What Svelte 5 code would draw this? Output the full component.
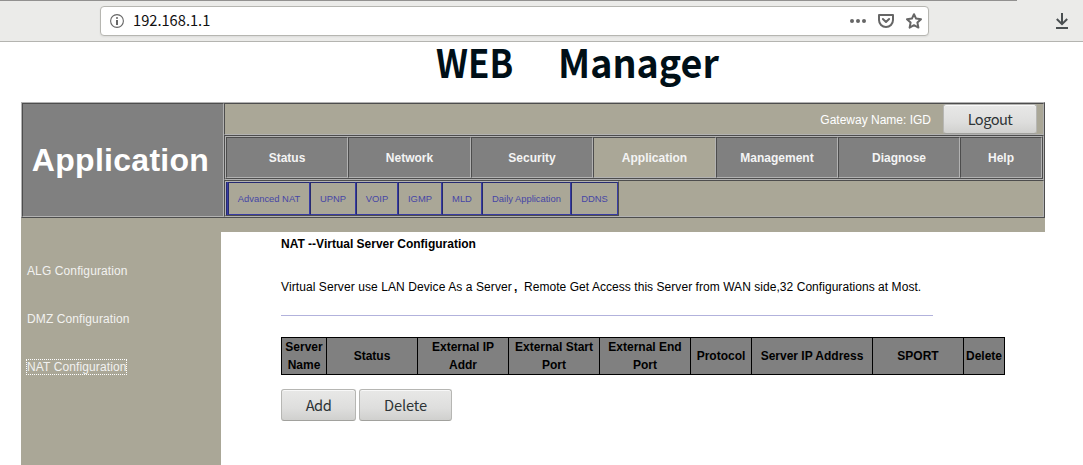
<script>
  const tabs = [
    ['Status', 122], ['Network', 123], ['Security', 122], ['Application', 123],
    ['Management', 122], ['Diagnose', 122], ['Help', 82]
  ];
  const subs = [
    ['Advanced NAT', 82], ['UPNP', 46], ['VOIP', 42], ['IGMP', 44],
    ['MLD', 40], ['Daily Application', 89], ['DDNS', 47]
  ];
  const side = ['ALG Configuration', 'DMZ Configuration', 'NAT Configuration'];
  const cols = [
    ['Server Name', 45], ['Status', 91], ['External IP Addr', 91], ['External Start Port', 91],
    ['External End Port', 91], ['Protocol', 61], ['Server IP Address', 121], ['SPORT', 91], ['Delete', 41]
  ];
</script>

<div class="chrome">
  <div class="url">
    <svg width="14" height="14" viewBox="0 0 14 14"><circle cx="7" cy="7" r="6.4" fill="none" stroke="#666" stroke-width="1.1"/><path d="M6 3.2h2v1.6H6zM6 6h2v5H6z" fill="#666"/></svg>
    <span>192.168.1.1</span>
    <svg class="dots" width="16" height="4" viewBox="0 0 16 4" fill="#666"><circle cx="2" cy="2" r="2"/><circle cx="8" cy="2" r="2"/><circle cx="14" cy="2" r="2"/></svg>
    <svg class="pocket" width="16" height="14" viewBox="0 0 16 14" fill="none" stroke="#666" stroke-width="2" stroke-linejoin="round" stroke-linecap="round"><path d="M1 1H15V6A7 7 0 0 1 1 6Z"/><path d="M4.9 5L8 8L11.1 5"/></svg>
    <svg class="star" width="16" height="16" viewBox="0 0 16 16" fill="none" stroke="#666" stroke-width="2" stroke-linejoin="round"><path d="M8 1.2L10.1 5.6L15 6.2L11.4 9.6L12.4 14.6L8 12.2L3.6 14.6L4.6 9.6L1 6.2L5.9 5.6Z"/></svg>
  </div>
  <svg class="download" width="12" height="16" viewBox="0 0 12 16" fill="none" stroke="#4a4f51" stroke-width="2"><path d="M6 0V11M.8 6L6 11.2L11.2 6M0 15H12"/></svg>
</div>

<h1 class="title"><span class="web">WEB</span><span class="manager">Manager</span></h1>

<main>
  <header>
    <div class="cell brand">Application</div>
    <div class="right">
      <div class="cell top"><span>Gateway Name: IGD</span><button class="logout">Logout</button></div>
      <div class="cell">
        <nav class="tabs">
          {#each tabs as [name, w]}
            <a class="cell" class:active={name === 'Application'} style:width="{w}px">{name}</a>
          {/each}
        </nav>
      </div>
      <div class="cell sub">
        <nav class="subs">
          {#each subs as [name, w]}
            <a style:width="{w}px">{name}</a>
          {/each}
        </nav>
      </div>
    </div>
  </header>
  <div class="body">
    <aside>
      {#each side as name}
        <a class:focused={name === 'NAT Configuration'}>{name}</a>
      {/each}
    </aside>
    <section>
      <h2>NAT --Virtual Server Configuration</h2>
      <p><span class="first">Virtual Server use LAN Device As a Server</span><span class="comma">,</span><span class="second">Remote Get Access this Server from WAN side,32 Configurations at Most.</span></p>
      <hr />
      <div class="table">
        {#each cols as [name, w]}
          <div style:width="{w}px">{name}</div>
        {/each}
      </div>
      <div class="buttons"><button class="add">Add</button><button class="del">Delete</button></div>
    </section>
  </div>
</main>

<style>
  :global(body) { background: #fff; overflow: hidden; }
  :global(#app) { height: 465px; overflow: hidden; font: 12px "Liberation Sans", Arial, sans-serif; }
  * { box-sizing: border-box; }
  .chrome { height: 42px; background: linear-gradient(90deg, #929190 1017px, #ebebe9 1017px) top / 100% 1px no-repeat, #ebebe9; border-bottom: 1px solid #b4b4b0; display: flex; align-items: center; padding-left: 100px; }
  .url { width: 829px; height: 30px; background: #fff; border: 1px solid #b6b6b1; border-radius: 4px; display: flex; align-items: center; padding: 0 6px 0 9px; box-shadow: 0 1px 2px #0001; }
  .url span { font: 14.67px/26px "Noto Sans CJK SC", sans-serif; color: #111; margin: 0 0 2px 9px; flex: 1; }
  .dots { margin-right: 12px; }
  .pocket { margin-right: 12px; }
  .download { margin-left: 127px; }
  .title { margin: 0; height: 60px; padding-left: 436px; display: flex; font: bold 39px/38px "Noto Sans CJK SC", sans-serif; color: #000f17; white-space: nowrap; }
  .title span { transform-origin: left; }
  .web { width: 122px; transform: scaleX(.895); }
  .manager { transform: scaleX(.966); }
  main { width: 1024px; margin-left: 21px; background: #aaa797; }
  header { height: 116px; display: flex; border: 1px solid; border-color: #b2b2b2 #4d4d4d #4d4d4d #b2b2b2; }
  .cell { border: 1px solid; border-color: #4d4d4d #b2b2b2 #b2b2b2 #4d4d4d; }
  .brand { width: 202px; background: #808080; color: #fff; font-weight: bold; font-size: 32px; letter-spacing: .28px; display: flex; align-items: center; justify-content: center; padding-right: 5px; }
  .right { flex: 1; }
  .top { height: 32px; display: flex; justify-content: flex-end; align-items: center; padding-right: 6px; color: #fff; gap: 12px; }
  .top span { padding-top: 2px; }
  button { font: 14.67px/20px "Noto Sans CJK SC", sans-serif; color: #2e3436; border: 1px solid #b6b6b3; border-bottom-color: #a1a19d; border-radius: 3px; background: linear-gradient(#e8e8e7, #dededd 60%, #d0d0ce); box-shadow: inset 0 1px #f8f8f8; padding: 0; height: 32px; }
  .logout { width: 94px; height: 30px; letter-spacing: -.55px; padding-bottom: 1px; }
  .tabs { height: 43px; display: flex; border: 1px solid; border-color: #b2b2b2 #4d4d4d #4d4d4d #b2b2b2; }
  .tabs a { display: flex; align-items: center; justify-content: center; background: #808080; color: #f4f4f4; font-weight: bold; }
  .tabs a.active { background: #aaa797; }
  .sub { height: 37px; }
  .subs { width: 394px; height: 35px; display: flex; border: 1px solid; border-color: #b2b2b2 #4d4d4d #4d4d4d #b2b2b2; padding-left: 2px; background: linear-gradient(90deg, #262a70 1px, #383ca4 1px); }
  .subs a { display: flex; align-items: center; justify-content: center; border: 1px solid; border-color: #262a70 #383ca4 #383ca4 #262a70; background: #aaa797; color: #4646a6; font-size: 9.4px; flex: none; }
  .body { display: flex; padding-top: 14px; }
  aside { width: 200px; height: 240px; padding: 32px 0 0 6px; display: flex; flex-direction: column; align-items: flex-start; gap: 34px; color: #f2f2f0; }
  aside a { line-height: 14px; letter-spacing: .11px; }
  .focused { outline: 1px dotted #fff; }
  section { flex: 1; background: #fff; padding: 4px 0 0 60px; }
  h2 { margin: 0; font-size: 12px; line-height: 16px; }
  p { margin: 27px 0 0; line-height: 16px; white-space: nowrap; display: flex; }
  .first { width: 231px; letter-spacing: .09px; }
  .second { letter-spacing: .05px; }
  .comma { width: 12px; padding-left: 2px; font-weight: bold; }
  hr { width: 652px; margin: 20px 0 0; border: 0; border-top: 1px solid #b2b2dc; }
  .table { width: 724px; height: 38px; margin-top: 21px; display: flex; border: 1px solid #000; border-right: 0; }
  .table div { border-right: 1px solid #000; background: #808080; display: flex; align-items: center; justify-content: center; text-align: center; font-weight: bold; line-height: 18px; padding: 0 1px; }
  .buttons { margin-top: 14px; display: flex; gap: 3px; }
  .add { width: 75px; letter-spacing: -.5px; }
  .del { width: 93px; letter-spacing: -.1px; }
</style>
